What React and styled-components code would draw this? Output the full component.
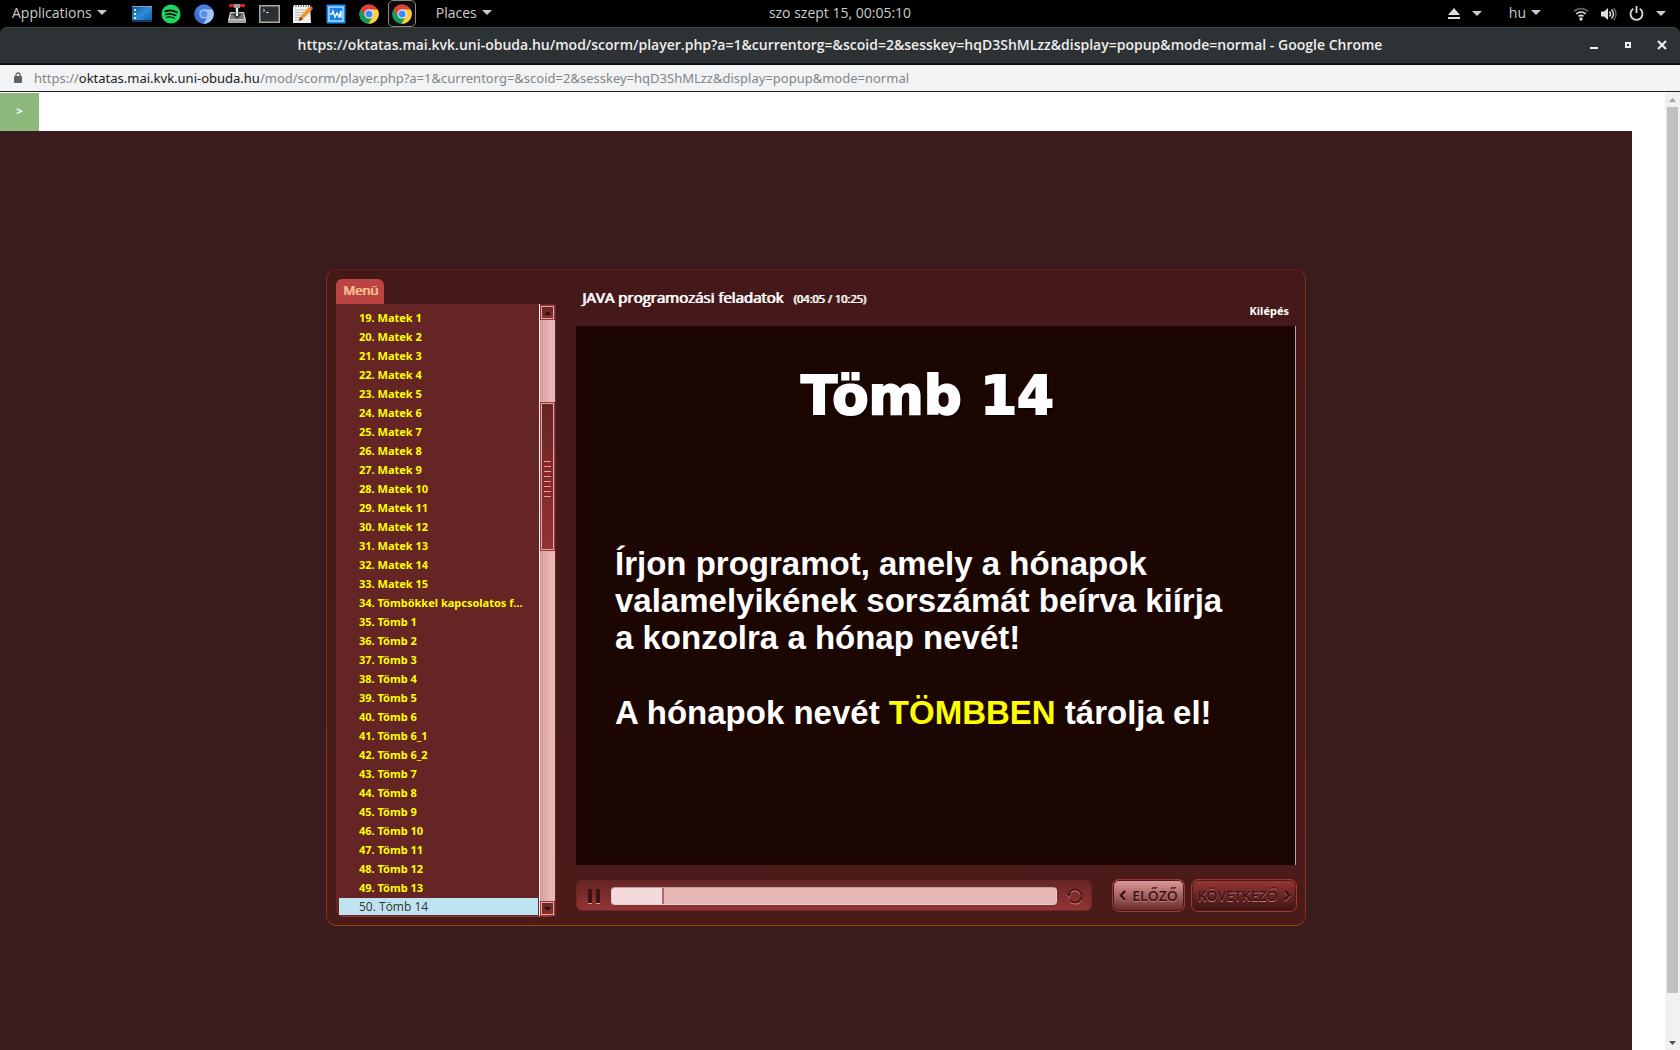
import React from 'react';
import styled, { createGlobalStyle, css } from 'styled-components';

const GlobalStyle = createGlobalStyle`
  * { box-sizing: border-box; }
  html, body { margin: 0; background: #fff; }
  body { font-family: "Noto Sans", "Open Sans", sans-serif; overflow: hidden; }
  button { font: inherit; color: inherit; border: 0; padding: 0; background: none; }
  a { color: inherit; text-decoration: none; }
`;

const Screen = styled.div`
  display: flex;
  flex-direction: column;
  height: 100vh;
`;

/* ---------- desktop bar ---------- */

const TopBar = styled.header`
  display: grid;
  grid-template-columns: 1fr auto 1fr;
  align-items: center;
  flex: none;
  height: 27px;
  background: #000;
  color: #ccc;
  font-family: "Open Sans", sans-serif;
  font-size: 14px;
  line-height: 24px;
`;

const Clock = styled.span`
  height: 26px;
`;

const Side = styled.div`
  display: flex;
  align-items: center;
  justify-content: ${(p) => (p.$end ? 'flex-end' : 'flex-start')};
  padding: 0 14px 0 12px;
`;

const BarButton = styled.button`
  display: flex;
  align-items: center;
  gap: ${(p) => (p.$icons ? 12 : 5)}px;
  height: 26px;
  padding-bottom: ${(p) => (p.$icons ? 0 : 2)}px;
  margin-left: ${(p) => p.$before || 0}px;
`;

const Caret = styled.span`
  border: 5px solid transparent;
  border-top-color: #ccc;
  border-bottom-width: 0;
`;

const Launchers = styled.div`
  display: flex;
  align-items: center;
  gap: 5px;
  margin: 0 20px 0 25px;
`;

const Launcher = styled.button`
  display: flex;
  align-items: center;
  justify-content: center;
  width: 28px;
  height: 27px;
  border: 1px solid ${(p) => (p.$active ? '#8a8a8a' : 'transparent')};
  border-radius: 5px;
  background: ${(p) => (p.$active ? '#0c0c0c' : 'none')};
  &:first-child { width: 20px; }
`;

const Glyph = styled.svg`
  display: block;
  flex: none;
`;

/* ---------- window ---------- */

const TitleBack = styled.div`
  flex: none;
  background: #000;
`;

const TitleBar = styled.div`
  display: grid;
  grid-template-columns: 160px 1fr 160px;
  align-items: center;
  height: 38px;
  border-top: 1px solid #414647;
  border-bottom: 2px solid #0c1012;
  border-radius: 7px 7px 0 0;
  background: #2d3235;
  color: #eeeeec;
`;

const WindowTitle = styled.h1`
  grid-column: 2;
  height: 35px;
  margin: 0;
  font-family: "Open Sans", sans-serif;
  font-size: 14px;
  font-weight: 600;
  line-height: 33px;
  text-align: center;
  white-space: nowrap;
`;

const WindowButtons = styled.div`
  display: flex;
  justify-content: flex-end;
  gap: 22px;
  padding: 0 12px 2px 0;
`;

const WindowButton = styled.button`
  display: flex;
  width: 12px;
  height: 12px;
`;

const AddressBar = styled.div`
  display: flex;
  align-items: center;
  flex: none;
  gap: 11px;
  height: 27px;
  padding-left: 13px;
  border-bottom: 1px solid #202124;
  background: #f1f3f4;
  color: #80868b;
  font-size: 13px;
  line-height: 26px;
  white-space: nowrap;
`;

const Host = styled.span`
  color: #202124;
`;

/* ---------- page ---------- */

const Viewport = styled.main`
  display: flex;
  flex: 1;
  min-height: 0;
`;

const Page = styled.div`
  display: flex;
  flex-direction: column;
  flex: 1;
  padding: 1px 33px 0 0;
  min-width: 0;
`;

const OpenToc = styled.button`
  flex: none;
  width: 39px;
  height: 38px;
  padding-bottom: 3px;
  background: #8cb87c;
  color: #fff;
  font-size: 11px;
  font-weight: 700;
`;

const Stage = styled.section`
  display: flex;
  justify-content: center;
  align-items: flex-start;
  flex: 1;
  padding-top: 138px;
  background: #3a1b1e;
`;

const PageScroll = styled.div`
  display: flex;
  flex-direction: column;
  width: 15px;
  background: #f1f1f1;
`;

const ScrollStep = styled.button`
  display: flex;
  align-items: center;
  justify-content: center;
  height: 15px;
`;

const ScrollTrack = styled.div`
  flex: 1;
  padding: 0 2px 42px;
`;

const ScrollThumb = styled.div`
  height: 100%;
  background: #c1c1c1;
`;

/* ---------- player ---------- */

const Player = styled.div`
  display: flex;
  width: 980px;
  max-width: 100%;
  gap: 20px;
  padding: 9px 8px 8px 9px;
  border: 1px solid;
  border-color: #6b2020 #7c3414 #984808;
  border-radius: 10px;
  background: linear-gradient(#451819, #4b1b1a);
`;

const Sidebar = styled.nav`
  display: flex;
  flex-direction: column;
  align-items: flex-start;
  width: 220px;
`;

const Tab = styled.button`
  height: 25px;
  padding: 0 6px 3px 7px;
  border-radius: 6px 6px 0 0;
  background: #b94442;
  color: #fbc596;
  font-family: "Open Sans", sans-serif;
  font-size: 13px;
  line-height: 22px;
`;

const MenuBox = styled.div`
  display: flex;
  width: 100%;
  border-bottom: 1px solid #943636;
  border-radius: 0 0 8px 8px;
  background: #642524;
`;

const MenuList = styled.ol`
  flex: 1;
  margin: 0;
  padding: 4px 1px 1px 3px;
  list-style: none;
  min-width: 0;
`;

const MenuItem = styled.li`
  height: 19px;
  padding-left: 20px;
  color: #ff0;
  font-size: 11px;
  font-weight: 700;
  line-height: 20px;
  white-space: nowrap;
  ${(p) =>
    p.$current &&
    css`
      height: 17px;
      margin-top: 1px;
      background: #c0e3f2;
      color: #333;
      font-family: "Open Sans", sans-serif;
      font-size: 12px;
      font-weight: 400;
      line-height: 18px;
    `}
`;

const Thick = styled.span`
  text-shadow: 1px 0 0 currentColor;
`;

const MenuScroll = styled.div`
  display: flex;
  flex-direction: column;
  width: 17px;
  padding: 1px 1px 0 0;
  border-left: 1px solid #fff;
  background: #642524;
`;

const MenuStep = styled.button`
  display: flex;
  align-items: center;
  justify-content: center;
  height: 15px;
  border: 1px solid #943636;
  outline: 1px solid #e0a5a4;
  outline-offset: -2px;
  background: linear-gradient(#642524, #8a3130);
`;

const MenuTrack = styled.div`
  display: flex;
  flex: 1;
  flex-direction: column;
  padding-top: 82px;
  background: linear-gradient(90deg, #d89c9a, #e6b7b6 10px);
`;

const MenuThumb = styled.div`
  display: flex;
  flex-direction: column;
  align-items: center;
  justify-content: center;
  gap: 3px;
  height: 149px;
  padding-top: 3px;
  border: 1px solid #943636;
  outline: 1px solid #e0a5a4;
  outline-offset: -2px;
  background: linear-gradient(#642524, #943332);
`;

const Grip = styled.span`
  width: 7px;
  height: 2px;
  border-top: 1px solid #b0101c;
  background: #e0a5a4;
`;

const Content = styled.div`
  display: flex;
  flex: 1;
  flex-direction: column;
  min-width: 0;
`;

const Heading = styled.div`
  display: flex;
  justify-content: space-between;
  height: 47px;
  padding: 8px 8px 0 6px;
  color: #fff;
`;

const LessonTitle = styled.h2`
  margin: 0;
  font-family: "Open Sans", sans-serif;
  font-size: 15px;
  font-weight: 400;
  line-height: 20px;
  white-space: nowrap;
`;

const Time = styled.span`
  margin-left: 10px;
  font-family: "Noto Sans", sans-serif;
  font-size: 11px;
`;

const Exit = styled.a`
  align-self: flex-end;
  padding-bottom: 5px;
  font-size: 11px;
  font-weight: 700;
  line-height: 20px;
`;

const Slide = styled.article`
  height: 539px;
  margin-right: 1px;
  padding: 39px 17px 0 39px;
  border-right: 1px solid #b9a3a3;
  background: #1c0602;
  color: #fff;
  font-family: "Liberation Sans", Arial, sans-serif;
`;

const SlideTitle = styled.h3`
  margin: 0 0 118px;
  padding-right: 38px;
  font-family: "DejaVu Sans", sans-serif;
  font-size: 53px;
  font-weight: 700;
  line-height: 62px;
  text-align: center;
  text-shadow: 2px 2px 2px #000;
  -webkit-text-stroke: 2px #fff;
`;

const SlideText = styled.p`
  margin: 0 0 38px;
  font-size: 33px;
  font-weight: 700;
  line-height: 37px;
`;

const Mark = styled.em`
  color: #ff0;
  font-style: normal;
`;

const Controls = styled.div`
  display: flex;
  align-items: center;
  height: 33px;
  margin-top: 14px;
`;

const SeekBar = styled.div`
  display: flex;
  align-items: center;
  flex: 1;
  height: 31px;
  margin-right: 20px;
  padding: 2px 9px 0 11px;
  border: 1px solid #6b2827;
  border-top: 0;
  border-radius: 6px;
  background: linear-gradient(#642524, #943534);
`;

const IconButton = styled.button`
  display: flex;
`;

const Seek = styled.input`
  flex: 1;
  min-width: 0;
  height: 18px;
  margin: 0 9px 0 11px;
  border: 1px solid #d9d0d0;
  border-top-color: #c2a09f;
  border-radius: 4px;
  appearance: none;
  background: linear-gradient(90deg, #f4dada ${(p) => p.$filled}%, #e6b7b6 0);
  &::-webkit-slider-thumb {
    appearance: none;
    width: 2px;
    height: 16px;
    background: #ad6c6b;
  }
`;

const StepButton = styled.button`
  display: flex;
  align-items: center;
  justify-content: center;
  gap: 6px;
  height: 33px;
  width: ${(p) => (p.$wide ? 106 : 73)}px;
  margin-right: ${(p) => (p.$wide ? 0 : 6)}px;
  border: 1px solid #9c3838;
  border-radius: 7px;
  box-shadow: inset 0 0 0 1px #4b1b1a;
  background: ${(p) =>
    p.$wide ? 'linear-gradient(#983736, #3a1312)' : 'linear-gradient(#e09c9b, #672a29)'};
  color: #3a1312;
  font-family: "Open Sans", sans-serif;
  font-size: 14px;
  font-weight: 600;
  text-shadow: 0 1px 0 #c07876;
`;

/* ---------- drawings ---------- */

const Chrome = ({ mono }) => {
  const [a, b, c, d] = mono
    ? ['#4a7fe0', '#3f6fd0', '#a6c5f7', '#5b8def']
    : ['#db4437', '#0f9d58', '#ffcd40', '#4285f4'];
  return (
    <Glyph width="20" height="20" viewBox="0 0 20 20">
      <circle cx="10" cy="10" r="9.7" fill={a} />
      <path d="M1.6 5.2A9.7 9.7 0 0 0 9.5 19.7l4.4-7.4L10 10 6 12.3z" fill={b} />
      <path d="M18.7 5.6A9.7 9.7 0 0 1 9.5 19.7l4.4-7.4L14.4 10 10 5.6z" fill={c} />
      <circle cx="10" cy="10" r="4.6" fill={mono ? '#bfd5fa' : '#fff'} />
      <circle cx="10" cy="10" r="3.6" fill={d} />
    </Glyph>
  );
};

const DesktopIcon = () => (
  <Glyph width="20" height="16" viewBox="0 0 20 16">
    <defs>
      <linearGradient id="desk" x2="1" y2="1">
        <stop stopColor="#0a4a8c" />
        <stop offset=".5" stopColor="#2f8fd6" />
        <stop offset="1" stopColor="#0c5aa0" />
      </linearGradient>
    </defs>
    <rect width="20" height="16" fill="url(#desk)" />
    <rect width="20" height="1" fill="#7aa9d0" />
    <rect y="14" width="20" height="2" fill="#123a60" />
    <path d="M2 3h2v2H2zM2 7h2v2H2zM2 11h2v2H2z" fill="#cfe8ff" />
  </Glyph>
);

const SpotifyIcon = () => (
  <Glyph width="20" height="20" viewBox="0 0 20 20">
    <circle cx="10" cy="10" r="9.5" fill="#1ed760" />
    <g fill="none" stroke="#06150b" strokeLinecap="round">
      <path d="M4.3 7.2c4-1.200 8.200-.8 11.600 1.100" strokeWidth="2" />
      <path d="M4.800 10.400c3.500-1 6.900-.6 9.900 1.100" strokeWidth="1.600" />
      <path d="M5.300 13.300c2.900-.8 5.700-.5 8.100 1" strokeWidth="1.300" />
    </g>
  </Glyph>
);

const DownloadIcon = () => (
  <Glyph width="20" height="20" viewBox="0 0 20 20">
    <path d="M3 8h14l2 8v3H1v-3z" fill="#c9c9c4" />
    <path d="M4 9h12l1 6H3z" fill="#77776f" />
    <rect x="1" y="16" width="18" height="3" fill="#a5a5a0" />
    <path d="M8 3h4v7h3l-5 5-5-5h3z" fill="#3b3b3b" />
    <path d="M9 4h2v8H9z" fill="#eee" />
    <rect x="2" y="0" width="16" height="3" rx="1" fill="#e02020" />
    <rect x="7" y="0" width="6" height="4" fill="#9b9b9b" />
  </Glyph>
);

const TerminalIcon = () => (
  <Glyph width="21" height="18" viewBox="0 0 21 18">
    <rect width="21" height="18" fill="#a9aaa6" />
    <rect x="1.500" y="1.500" width="18" height="15" fill="#2b3133" />
    <path d="M4 4l2 1.500L4 7M7 7.500h3" stroke="#c8d0d0" fill="none" />
  </Glyph>
);

const NotesIcon = () => (
  <Glyph width="21" height="20" viewBox="0 0 21 20">
    <path d="M1 1h17l1 18H1z" fill="#f2f2ee" />
    <path d="M1 2h17" stroke="#666" strokeWidth="2" strokeDasharray="1 1.500" />
    <path d="M3 6h12M3 8.500h10M3 11h7M3 13.500h6M3 16h8" stroke="#b5b5b5" />
    <path d="M17 3l3 3-9 9-4 2 1-4z" fill="#f0932b" />
    <path d="M17 3l3 3 1-2-2-2z" fill="#d86a70" />
    <path d="M8 13l3 2-4 2z" fill="#5a3a20" />
  </Glyph>
);

const MonitorIcon = () => (
  <Glyph width="20" height="20" viewBox="0 0 20 20">
    <rect x=".5" y=".5" width="19" height="19" rx="1" fill="#1b8cf0" />
    <rect x="3" y="3" width="14" height="14" fill="#1684e6" stroke="#fff" />
    <path d="M4 10h2l1-3 2 6 2-4 2 4 2-6v7" stroke="#fff" strokeWidth="1.300" fill="none" />
  </Glyph>
);

const EjectIcon = () => (
  <Glyph width="12" height="12" viewBox="0 0 12 12" fill="#ddd">
    <path d="M6 0l6 7H0zM0 9h12v2H0z" />
  </Glyph>
);

const WifiIcon = () => (
  <Glyph width="16" height="14" viewBox="0 0 16 14" fill="none" strokeWidth="1.700">
    <path d="M1 4.500c4-4 10-4 14 0" stroke="#666" />
    <path d="M3.300 7c2.800-2.600 6.600-2.600 9.400 0" stroke="#ddd" />
    <path d="M5.500 9.300c1.600-1.300 3.400-1.300 5 0" stroke="#ddd" />
    <circle cx="8" cy="12" r="1.700" fill="#ddd" />
  </Glyph>
);

const VolumeIcon = () => (
  <Glyph width="16" height="14" viewBox="0 0 16 14" fill="none" strokeWidth="1.500">
    <path d="M0 4.500h3L7 1v12L3 9.500H0z" fill="#ddd" />
    <path d="M8.500 4.500c1.300 1.500 1.300 3.500 0 5M10.500 2.500c2.400 2.700 2.400 6.300 0 9" stroke="#ddd" />
    <path d="M12.700 1c3 3.600 3 8.400 0 12" stroke="#666" />
  </Glyph>
);

const PowerIcon = () => (
  <Glyph width="15" height="15" viewBox="0 0 15 15" fill="none" stroke="#ddd" strokeWidth="1.800">
    <path d="M4.300 2.800a6 6 0 1 0 6.400 0M7.500 0v7" />
  </Glyph>
);

const LockIcon = () => (
  <Glyph width="10" height="12" viewBox="0 0 10 12">
    <rect x="1" y="4" width="8" height="7" rx="1" fill="#5f6368" />
    <path d="M3 5V3a2 2 0 0 1 4 0v2" fill="none" stroke="#5f6368" strokeWidth="1.300" />
  </Glyph>
);

const windowGlyphs = {
  Minimize: <path d="M2 9h8" strokeWidth="2" />,
  Maximize: <path d="M4 4h4v4H4z" strokeWidth="2" />,
  Close: <path d="M2 2l8 8M10 2l-8 8" strokeWidth="2.200" />,
};

const Arrow = ({ up, fill, size = 7 }) => (
  <Glyph width={size} height="4" viewBox="0 0 7 4" fill={fill}>
    <path d={up ? 'M3.500 0L7 4H0z' : 'M0 0h7L3.500 4z'} />
  </Glyph>
);

const PauseIcon = () => (
  <Glyph width="12" height="15" viewBox="0 0 12 15">
    <path d="M0 0h4v14H0zM8 0h4v14H8z" fill="#3a1312" />
    <path d="M0 14h4v1H0zM8 14h4v1H8z" fill="#d89a98" />
  </Glyph>
);

const ReplayShape = ({ color, dy }) => (
  <g transform={`translate(0 ${dy})`} stroke={color} fill={color}>
    <path d="M4.300 12.500A6.500 6.500 0 1 0 2.700 6.500" fill="none" strokeWidth="2" />
    <path d="M0 5.500h5.500L2.800 9.500z" strokeWidth="0" />
  </g>
);

const ReplayIcon = () => (
  <Glyph width="16" height="17" viewBox="0 0 16 17">
    <ReplayShape color="#c98684" dy={1} />
    <ReplayShape color="#4a1817" dy={0} />
  </Glyph>
);

const Chevron = ({ left }) => (
  <Glyph width="7" height="12" viewBox="0 0 7 12" fill="none" strokeWidth="2.400">
    <path d={left ? 'M6 2L2 6.500 6 11' : 'M1 2l4 4.500L1 11'} stroke="#c07876" />
    <path d={left ? 'M6 1L2 5.500 6 10' : 'M1 1l4 4.500L1 10'} stroke="#3a1312" />
  </Glyph>
);

/* ---------- data ---------- */

const launchers = [
  ['Desktop', <DesktopIcon />],
  ['Spotify', <SpotifyIcon />],
  ['Chromium', <Chrome mono />],
  ['Downloads', <DownloadIcon />],
  ['Terminal', <TerminalIcon />],
  ['Notes', <NotesIcon />],
  ['Monitor', <MonitorIcon />],
  ['Chrome', <Chrome />],
  ['Chrome window', <Chrome />],
];

const tombNames = ['1', '2', '3', '4', '5', '6', '6_1', '6_2', '7', '8', '9', '10', '11', '12', '13', '14'];

const lessons = [
  ...Array.from({ length: 15 }, (_, i) => `Matek ${i + 1}`),
  'Tömbökkel kapcsolatos f...',
  ...tombNames.map((n) => `Tömb ${n}`),
].map((title, i) => ({ number: 19 + i, title }));

const CURRENT = 50;
const PATH = '/mod/scorm/player.php?a=1&currentorg=&scoid=2&sesskey=hqD3ShMLzz&display=popup&mode=normal';

export default function App() {
  return (
    <Screen>
      <GlobalStyle />
      <TopBar>
        <Side>
          <BarButton>Applications <Caret /></BarButton>
          <Launchers>
            {launchers.map(([name, icon], i) => (
              <Launcher key={name} aria-label={name} $active={i === launchers.length - 1}>{icon}</Launcher>
            ))}
          </Launchers>
          <BarButton>Places <Caret /></BarButton>
        </Side>
        <Clock>szo szept 15, 00:05:10</Clock>
        <Side $end>
          <BarButton $icons aria-label="Eject"><EjectIcon /><Caret /></BarButton>
          <BarButton $before={27}>hu <Caret /></BarButton>
          <BarButton $icons $before={32} aria-label="System">
            <WifiIcon /><VolumeIcon /><PowerIcon /><Caret />
          </BarButton>
        </Side>
      </TopBar>

      <TitleBack>
        <TitleBar>
          <WindowTitle>https://oktatas.mai.kvk.uni-obuda.hu{PATH} - Google Chrome</WindowTitle>
          <WindowButtons>
            {Object.entries(windowGlyphs).map(([name, shape]) => (
              <WindowButton key={name} aria-label={name}>
                <Glyph width="12" height="12" viewBox="0 0 12 12" fill="none" stroke="#eeeeec">{shape}</Glyph>
              </WindowButton>
            ))}
          </WindowButtons>
        </TitleBar>
      </TitleBack>

      <AddressBar>
        <LockIcon />
        <span>https://<Host>oktatas.mai.kvk.uni-obuda.hu</Host>{PATH}</span>
      </AddressBar>

      <Viewport>
        <Page>
          <OpenToc>&gt;</OpenToc>
          <Stage>
            <Player>
              <Sidebar>
                <Tab><Thick>Menü</Thick></Tab>
                <MenuBox>
                  <MenuList>
                    {lessons.map(({ number, title }) => (
                      <MenuItem key={number} $current={number === CURRENT}>
                        <a href={`#${number}`}>{number}. {title}</a>
                      </MenuItem>
                    ))}
                  </MenuList>
                  <MenuScroll>
                    <MenuStep aria-label="Scroll up"><Arrow up fill="#2c0f0e" /></MenuStep>
                    <MenuTrack>
                      <MenuThumb>
                        {Array.from({ length: 8 }, (_, i) => <Grip key={i} />)}
                      </MenuThumb>
                    </MenuTrack>
                    <MenuStep aria-label="Scroll down"><Arrow fill="#2c0f0e" /></MenuStep>
                  </MenuScroll>
                </MenuBox>
              </Sidebar>

              <Content>
                <Heading>
                  <LessonTitle>
                    <Thick>JAVA programozási feladatok</Thick>
                    <Time><Thick>(04:05 / 10:25)</Thick></Time>
                  </LessonTitle>
                  <Exit href="#exit">Kilépés</Exit>
                </Heading>
                <Slide>
                  <SlideTitle>Tömb 14</SlideTitle>
                  <SlideText>
                    Írjon programot, amely a hónapok<br />
                    valamelyikének sorszámát beírva kiírja<br />
                    a konzolra a hónap nevét!
                  </SlideText>
                  <SlideText>A hónapok nevét <Mark>TÖMBBEN</Mark> tárolja el!</SlideText>
                </Slide>
                <Controls>
                  <SeekBar>
                    <IconButton aria-label="Pause"><PauseIcon /></IconButton>
                    <Seek type="range" aria-label="Position" min="0" max="444" defaultValue="50" $filled={11.3} />
                    <IconButton aria-label="Replay"><ReplayIcon /></IconButton>
                  </SeekBar>
                  <StepButton><Chevron left />ELŐZŐ</StepButton>
                  <StepButton $wide>KÖVETKEZŐ<Chevron /></StepButton>
                </Controls>
              </Content>
            </Player>
          </Stage>
        </Page>
        <PageScroll>
          <ScrollStep aria-label="Page up"><Arrow up fill="#a3a3a3" /></ScrollStep>
          <ScrollTrack><ScrollThumb /></ScrollTrack>
          <ScrollStep aria-label="Page down"><Arrow fill="#505050" /></ScrollStep>
        </PageScroll>
      </Viewport>
    </Screen>
  );
}
